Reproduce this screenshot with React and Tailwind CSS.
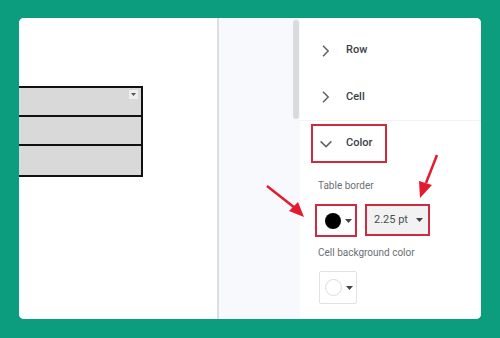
import React from "react";

function Caret({ className = "" }) {
  return (
    <svg width="7" height="4" viewBox="0 0 7 4" className={className}>
      <path d="M0 0 L7 0 L3.5 4 Z" fill="#444" />
    </svg>
  );
}

function ChevronRight() {
  return (
    <svg width="12" height="12" viewBox="0 0 12 12" className="block">
      <path d="M3 0.8 L8.2 6 L3 11.2" fill="none" stroke="#5f6368" strokeWidth="1.5" />
    </svg>
  );
}

function ChevronDown() {
  return (
    <svg width="12" height="12" viewBox="0 0 12 12" className="block">
      <path d="M0.6 3.4 L6 8.6 L11.4 3.4" fill="none" stroke="#5f6368" strokeWidth="1.5" />
    </svg>
  );
}

export default function App() {
  return (
    <div className="w-[500px] h-[338px] bg-[#0b9d7e] pt-[18px] pl-[19px] pr-[19px] pb-[19px] font-['Roboto','Liberation_Sans',sans-serif]">
      <div className="relative w-[462px] h-[301px] bg-white rounded-[5px] overflow-hidden flex">
        {/* Left sheet area */}
        <div className="w-[198px] h-full bg-white pt-[68px]">
          <div className="w-[124px] border-2 border-l-0 border-[#111] bg-[#d9d9d9] flex flex-col">
            <div className="h-[29px] relative border-b-2 border-[#111]">
              <div className="absolute right-[3px] top-[2px] w-[9px] h-[9px] bg-[#eeeeee] flex items-center justify-center">
                <svg width="5" height="3" viewBox="0 0 5 3"><path d="M0 0 L5 0 L2.5 3 Z" fill="#555" /></svg>
              </div>
            </div>
            <div className="h-[29px] border-b-2 border-[#111]" />
            <div className="h-[29px]" />
          </div>
        </div>
        {/* Separator */}
        <div className="w-[2px] h-full bg-[#dcdee2]" />
        {/* Light gutter */}
        <div className="w-[81px] h-full bg-[#f7f9fc] pt-[2px] pl-[74px]">
          <div className="w-[6px] h-[99px] rounded-full bg-[#d9dbdf]" />
        </div>
        {/* Right panel */}
        <div className="w-[181px] h-full bg-white pt-[9px] text-[#3c4043]">
          <div className="h-[47px] flex items-center pl-[20px]">
            <ChevronRight />
            <span className="ml-[14px] text-[11px] font-medium">Row</span>
          </div>
          <div className="h-[47px] flex items-center pl-[20px] border-b border-[#f1f3f4]">
            <ChevronRight />
            <span className="ml-[14px] text-[11px] font-medium">Cell</span>
          </div>
          <div className="mt-[3px] ml-[11px] w-[76px] h-[39px] border-2 border-[#cf2a43] flex items-center pl-[7px]">
            <ChevronDown />
            <span className="ml-[14px] text-[11px] font-medium">Color</span>
          </div>
          <div className="mt-[16px] ml-[18px] text-[10px] leading-[14px] text-[#6b6f74]">Table border</div>
          <div className="mt-[11px] ml-[15px] flex gap-[8px]">
            <div className="w-[42px] h-[33px] border-2 border-[#cf2a43] flex items-center pl-[8px] gap-[4px]">
              <div className="w-[16px] h-[16px] rounded-full bg-black" />
              <Caret />
            </div>
            <div className="w-[65px] h-[32px] border-2 border-[#cf2a43] bg-[#f2f2f2] flex items-center pl-[7px] gap-[8px]">
              <span className="text-[11px] text-[#4a4d51]">2.25 pt</span>
              <Caret />
            </div>
          </div>
          <div className="mt-[9px] ml-[18px] text-[10px] leading-[14px] text-[#6b6f74]">Cell background color</div>
          <div className="mt-[11px] ml-[19px] w-[38px] h-[33px] border border-[#e0e2e5] rounded-[2px] flex items-center pl-[5px] gap-[4px]">
            <div className="w-[17px] h-[17px] rounded-full border border-[#dadce0] bg-white" />
            <Caret />
          </div>
        </div>
        {/* Annotation arrows */}
        <svg className="absolute left-0 top-0 pointer-events-none" width="462" height="301" viewBox="0 0 462 301">
          <line x1="248" y1="168" x2="276" y2="190" stroke="#e31b2f" strokeWidth="2.5" />
          <path d="M285 199 L270 193 L279 184 Z" fill="#e31b2f" />
          <line x1="418" y1="137" x2="407" y2="165" stroke="#e31b2f" strokeWidth="2.5" />
          <path d="M401 180 L400 163 L413 167 Z" fill="#e31b2f" />
        </svg>
      </div>
    </div>
  );
}
